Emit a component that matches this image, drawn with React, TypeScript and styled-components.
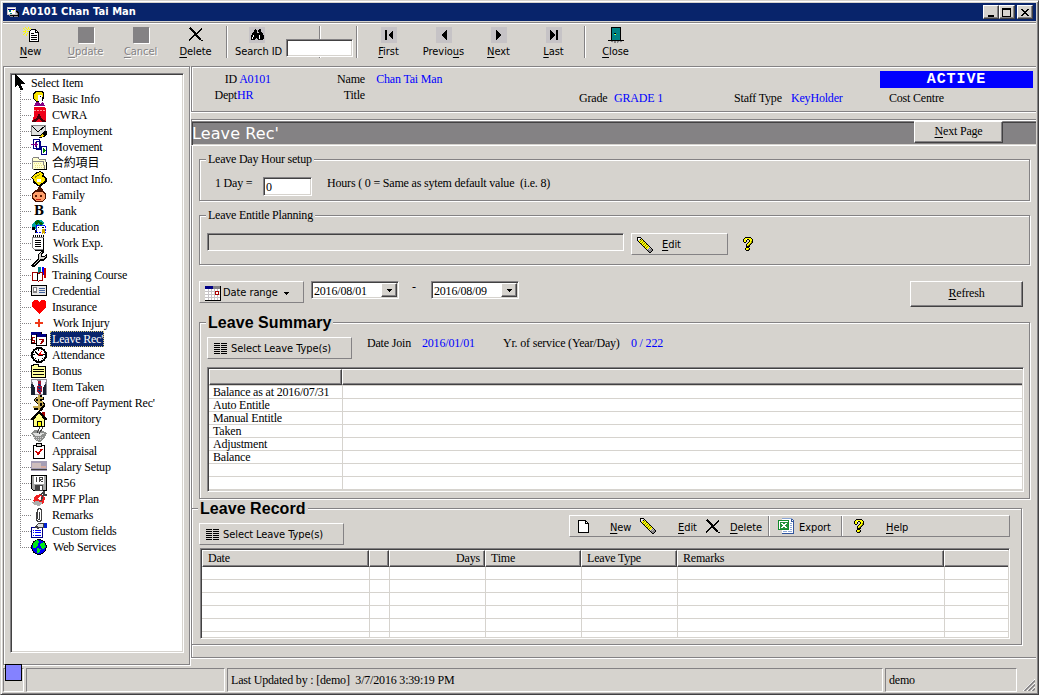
import React from "react";
import styled, { createGlobalStyle, css } from "styled-components";

const face = "#d6d3ce";
const shade = "#848284";
const dark = "#424142";
const navy = "#08246b";
const serif = `"Liberation Serif", "Noto Sans CJK TC", serif`;
const sans = `"DejaVu Sans Condensed", "DejaVu Sans", sans-serif`;

const GlobalStyle = createGlobalStyle`
  * { box-sizing: border-box; }
  body { margin: 0; background: #fff; font: 12px/14px ${serif}; letter-spacing: -0.19px; color: #000; overflow: hidden; }
  svg { display: block; flex: none; }
  u { text-decoration: underline; text-underline-offset: 2px; text-decoration-thickness: 1px; }
`;

const raised = css`
  border: 1px solid;
  border-color: #fff ${dark} ${dark} #fff;
  box-shadow: inset -1px -1px 0 ${shade};
  background: ${face};
`;
const thinRaised = css`
  border: 1px solid;
  border-color: #fff ${shade} ${shade} #fff;
  background: ${face};
`;
const sunken = css`
  border: 1px solid;
  border-color: ${shade} #fff #fff ${shade};
  box-shadow: inset 1px 1px 0 ${dark}, inset -1px -1px 0 ${face};
`;
const etched = css`
  border: 1px solid ${shade};
  box-shadow: 1px 1px 0 #fff, inset 1px 1px 0 #fff;
`;

const Window = styled.div`
  width: 1039px;
  height: 695px;
  padding: 2px;
  display: flex;
  flex-direction: column;
  background: ${face};
  border: 1px solid;
  border-color: ${face} ${dark} ${dark} ${face};
  box-shadow: inset 1px 1px 0 #fff, inset -1px -1px 0 ${shade};
  white-space: pre;
`;
const TitleBar = styled.div`
  height: 18px;
  flex: none;
  margin-bottom: 1px;
  padding: 0 3px 0 4px;
  display: flex;
  align-items: center;
  background: ${navy};
  color: #fff;
  font: bold 11px/18px ${sans};
`;
const TitleText = styled.span`
  flex: 1;
  margin-left: 3px;
  letter-spacing: 0.08px;
`;
const WinButton = styled.div<{ $gap?: number }>`
  ${raised}
  width: 16px;
  height: 14px;
  margin-left: ${(p) => p.$gap ?? 0}px;
  display: flex;
  align-items: center;
  justify-content: center;
`;
const Toolbar = styled.div`
  height: 44px;
  flex: none;
  display: flex;
  border-top: 1px solid ${shade};
  box-shadow: inset 0 1px 0 #fff;
  padding-top: 4px;
`;
const Tool = styled.div<{ $w?: number; $off?: boolean }>`
  width: ${(p) => p.$w ?? 55}px;
  display: flex;
  flex-direction: column;
  align-items: center;
  gap: 2px;
  font: 11px/14px ${sans};
  letter-spacing: -0.05px;
  color: ${(p) => (p.$off ? shade : "#000")};
  text-shadow: ${(p) => (p.$off ? "1px 1px 0 #fff" : "none")};
`;
const Blank = styled.div`
  width: 16px;
  height: 16px;
  background: ${shade};
  box-shadow: 1px 1px 0 #fff;
`;
const Sep = styled.div<{ $l?: number; $r?: number; $h?: number }>`
  width: 2px;
  height: ${(p) => p.$h ?? 32}px;
  margin: -1px ${(p) => p.$r ?? 0}px 0 ${(p) => p.$l ?? 0}px;
  background: linear-gradient(90deg, ${shade} 50%, #fff 50%);
`;
const SearchSlot = styled.div`
  width: 67px;
  height: 32px;
  margin-top: -1px;
  display: flex;
  align-items: flex-end;
  background: linear-gradient(90deg, ${shade} 50%, #fff 50%) 33px 0 / 2px 32px no-repeat;
`;
const SearchInput = styled.div`
  ${sunken}
  width: 67px;
  height: 18px;
  margin-bottom: 1px;
  background: #fff;
`;
const Body = styled.div`
  height: 601px;
  flex: none;
  display: flex;
`;
const Side = styled.div`
  ${etched}
  width: 187px;
  height: 599px;
  padding: 6px;
  flex: none;
`;
const Tree = styled.div`
  ${sunken}
  width: 174px;
  height: 580px;
  background: #fff;
  padding: 0 0 0 4px;
`;
const TreeRoot = styled.div`
  display: flex;
  height: 17px;
  line-height: 18px;
`;
const Branches = styled.div`
  margin-left: 5px;
`;
const Branch = styled.div<{ $last?: boolean }>`
  height: 16px;
  display: flex;
  align-items: center;
  background:
    repeating-linear-gradient(180deg, ${shade} 0 1px, transparent 1px 2px) 0 0 / 1px ${(p) => (p.$last ? 9 : 16)}px no-repeat,
    repeating-linear-gradient(90deg, ${shade} 0 1px, transparent 1px 2px) 0 8px / 11px 1px no-repeat;
  padding-left: 11px;
`;
const BranchText = styled.span<{ $on?: boolean; $indent?: boolean }>`
  height: 16px;
  line-height: 16px;
  margin-left: 3px;
  padding: 0 1px 0 ${(p) => (p.$indent ? 3 : 2)}px;
  color: ${(p) => (p.$on ? "#fff" : "#000")};
  background: ${(p) => (p.$on ? navy : "transparent")};
  outline: ${(p) => (p.$on ? "1px dotted #d8c878" : "none")};
  outline-offset: -1px;
`;
const Right = styled.div`
  flex: 1;
  margin-left: 1px;
  display: flex;
  flex-direction: column;
`;
const Info = styled.div`
  height: 46px;
  flex: none;
  border: solid ${shade};
  border-width: 1px 0 1px 1px;
  box-shadow: 0 1px 0 #fff, inset 1px 1px 0 #fff;
  display: flex;
  padding-top: 4px;
`;
const InfoCol = styled.div<{ $w: number; $top?: number; $right?: boolean; $blue?: boolean }>`
  width: ${(p) => p.$w}px;
  flex: none;
  padding-top: ${(p) => p.$top ?? 0}px;
  line-height: 16px;
  text-align: ${(p) => (p.$right ? "right" : "left")};
  color: ${(p) => (p.$blue ? "#00f" : "#000")};
`;
const CostCol = styled.div`
  width: 153px;
  line-height: 16px;
`;
const Status = styled.div`
  height: 17px;
  background: #00f;
  color: #fff;
  font: bold 15px/18px "Liberation Mono", monospace;
  letter-spacing: 0.9px;
  text-align: center;
`;
const CostLabel = styled.div`
  padding: 2px 0 0 9px;
`;
const Main = styled.div`
  height: 539px;
  flex: none;
  margin-top: 7px;
  border: solid ${shade};
  border-width: 1px 0 1px 1px;
  box-shadow: 0 1px 0 #fff, inset 1px 1px 0 #fff;
  padding: 1px 0 0 7px;
`;
const PageTitle = styled.div`
  margin-left: -8px;
  height: 25px;
  display: flex;
  justify-content: space-between;
  border: solid ${shade};
  border-width: 1px 0 0 1px;
  border-bottom: 1px solid #fff;
  background: ${shade};
  box-shadow: inset 1px 1px 0 ${dark}, inset 0 -1px 0 ${face};
  color: #fff;
  font: 16px/23px "DejaVu Sans", sans-serif;
  letter-spacing: 0.1px;
`;
const Button = styled.div<{ $w: number; $h: number }>`
  ${raised}
  width: ${(p) => p.$w}px;
  height: ${(p) => p.$h}px;
  padding-bottom: 2px;
  display: flex;
  align-items: center;
  justify-content: center;
  color: #000;
  font: 12px/14px ${serif};
  letter-spacing: -0.19px;
`;
const NextSlot = styled.div`
  margin: -1px 33px 0 0;
`;
const Group = styled.div<{ $h: number; $mt: number; $ml?: number }>`
  ${etched}
  width: 831px;
  height: ${(p) => p.$h}px;
  margin: ${(p) => p.$mt}px 0 0 ${(p) => p.$ml ?? 0}px;
  padding: 0 7px;
  display: flex;
  flex-direction: column;
  align-items: flex-start;
`;
const Legend = styled.div<{ $big?: boolean; $w: number }>`
  flex: none;
  width: ${(p) => p.$w}px;
  height: 17px;
  margin: -9px 0 0 -1px;
  padding-left: 2px;
  background: ${face};
  font: ${(p) => (p.$big ? `bold 16px/18px "Liberation Sans", sans-serif` : `12px/17px ${serif}`)};
  letter-spacing: ${(p) => (p.$big ? 0.05 : -0.23)}px;
`;
const Row = styled.div<{ $mt?: number; $ml?: number; $h?: number }>`
  display: flex;
  flex: none;
  height: ${(p) => (p.$h ? `${p.$h}px` : "auto")};
  margin: ${(p) => p.$mt ?? 0}px 0 0 ${(p) => p.$ml ?? 0}px;
`;
const Text = styled.span<{ $w?: number; $ml?: number; $mt?: number; $blue?: boolean }>`
  width: ${(p) => (p.$w ? `${p.$w}px` : "auto")};
  margin: ${(p) => p.$mt ?? 0}px 0 0 ${(p) => p.$ml ?? 0}px;
  color: ${(p) => (p.$blue ? "#00f" : "#000")};
`;
const Field = styled.div<{ $w: number; $h: number; $plain?: boolean }>`
  ${sunken}
  width: ${(p) => p.$w}px;
  height: ${(p) => p.$h}px;
  padding: 2px 0 0 2px;
  background: ${(p) => (p.$plain ? face : "#fff")};
`;
const ThinButton = styled.div<{ $w: number }>`
  ${thinRaised}
  width: ${(p) => p.$w}px;
  height: 22px;
  padding: 2px 0 0 5px;
  display: flex;
  align-items: center;
  font: 11px/14px ${sans};
  letter-spacing: -0.08px;
`;
const ThinText = styled.span<{ $ml: number }>`
  margin-left: ${(p) => p.$ml}px;
`;
const Combo = styled.div`
  ${sunken}
  width: 88px;
  height: 18px;
  padding: 1px;
  display: flex;
  justify-content: space-between;
  background: #fff;
  line-height: 17px;
`;
const ComboButton = styled.div`
  ${raised}
  width: 16px;
  height: 14px;
  display: flex;
  align-items: center;
  justify-content: center;
`;
const Spacer = styled.div`
  flex: 1;
`;
const Grid = styled.div<{ $w: number; $h: number }>`
  ${sunken}
  width: ${(p) => p.$w}px;
  height: ${(p) => p.$h}px;
  padding: 1px;
  background: #fff;
  overflow: hidden;
  flex: none;
`;
const HeadRow = styled.div<{ $cols: string }>`
  display: grid;
  grid-template-columns: ${(p) => p.$cols};
  height: 17px;
  border-bottom: 1px solid ${face};
`;
const HeadCell = styled.div<{ $right?: boolean }>`
  border: 1px solid;
  border-color: #fff ${dark} ${dark} #fff;
  box-shadow: inset -1px -1px 0 ${shade};
  background: ${face};
  padding: 0 4px 0 5px;
  line-height: 15px;
  text-align: ${(p) => (p.$right ? "right" : "left")};
  &:last-child { border-right: 0; box-shadow: inset 0 -1px 0 ${shade}; }
`;
const BodyRow = styled.div<{ $cols: string }>`
  display: grid;
  grid-template-columns: ${(p) => p.$cols};
  height: 13px;
  border-bottom: 1px solid ${face};
`;
const BodyCell = styled.div`
  height: 12px;
  line-height: 13px;
  padding-left: 4px;
  box-shadow: 1px 0 0 ${face};
  &:last-child { box-shadow: none; }
`;
const RecordBar = styled.div`
  ${thinRaised}
  width: 441px;
  height: 22px;
  padding-left: 8px;
  display: flex;
  align-items: center;
  font: 11px/14px ${sans};
  letter-spacing: -0.08px;
`;
const BarText = styled.span<{ $w: number; $pad: number }>`
  width: ${(p) => p.$w}px;
  padding: 3px 0 0 ${(p) => p.$pad}px;
`;
const StatusBar = styled.div`
  display: flex;
  padding-top: 1px;
  height: 25px;
  gap: 2px;
`;
const StatusCell = styled.div<{ $w: number }>`
  width: ${(p) => p.$w}px;
  height: 24px;
  padding-left: 3px;
  line-height: 22px;
  border: 1px solid;
  border-color: ${shade} #fff #fff ${shade};
`;
const Swatch = styled.div`
  width: 17px;
  height: 17px;
  margin: -5px 0 0 -2px;
  background: #8482ff;
  border: 1px solid #000;
  position: relative;
`;
const GripSlot = styled.div`
  flex: 1;
  display: flex;
  justify-content: flex-end;
  align-items: flex-end;
  padding: 0 1px 1px 0;
`;

const palette: Record<string, string> = {
  k: "#000", w: "#fff", y: "#ff0", g: "#848284", s: "#c6c3c6", t: "#008284",
  o: "#848200", n: "#000084", c: "#0ff", f: "#21923a", e: "#108a29", b: "#31559c", h: "#8ca6d6",
};

/* Draws a small bitmap: one character per pixel, runs merged into one rect. */
function Pixels({ rows }: { rows: string[] }) {
  const w = Math.max(...rows.map((r) => r.length));
  const rects: React.ReactNode[] = [];
  rows.forEach((row, y) => {
    let x = 0;
    while (x < row.length) {
      let n = x + 1;
      while (n < row.length && row[n] === row[x]) n++;
      if (palette[row[x]]) rects.push(<rect key={`${x}-${y}`} x={x} y={y} width={n - x} height={1} fill={palette[row[x]]} />);
      x = n;
    }
  });
  return <svg width={w} height={rows.length} shapeRendering="crispEdges">{rects}</svg>;
}

const art = {
  app: [
    "sssssssss...", "swwwwwwws...", "snnnnnnns...", "swttwwyws...", "swttwwwwskk.", "swwwwwwwsgkk", "swwttwwwssgk", "ssssssssssgk", "..gkkkkkkkkk", "...gggkggggk",
  ],
  neu: [
    "..y..y..........", "y..y.y.y........", ".y..y.y.kkkkk...", "..y....kwwwwkk..", "yyy.yykwwwwwkwk.", "..y...kwwwwwkkkk",
    ".y..y.kwkkkwwwwk", "y..y..kwwwwwwwwk", "...y..kwkkkkkkwk", "......kwwwwwwwwk", "......kwkkkkkkwk", "......kwwwwwwwwk", "......kwkkkkkkwk", "......kwwwwwwwwk", "......kkkkkkkkkk",
  ],
  cross: [
    ".k............", "kkk.........k.", ".kkk.......kk.", "..kkk.....kk..", "...kkk...kk...", "....kkk.kk....", ".....kkkk.....", ".....kkk......", "....kkkkk.....", "...kk..kkk....", "..kk....kkk...", ".kk......kkk..", "kk........kk..", "k...........kk",
  ],
  find: [
    "ssssssssssssssss", "ssssssssssssssss", "sssssskssskkssss", "ssssskkkskkkssss", "ssssskkkskkkssss", "sssskkkksskkksss", "ssskkkkkkkkkkkss", "ssskkkkkkkkkkkss", "sskkwkkkkkwkkkks", "sskkwkkkkkwkkkks", "sskwkkkkkkwkkkks", "sskwkkkskkwkkkks", "sskkkkssskkkkkss", "ssssssssssssssss", "ssssssssssssssss", "ssssssssssssssss",
  ],
  cursor: [
    "k...........", "kk..........", "kkk.........", "kkkk........", "kkkkk.......", "kkkkkk......", "kkkkkkk.....", "kkkkkkkk....", "kkkkkkkkk...", "kkkkkkkkkk..", "kkkkkk......", "kk.kkk......", "k...kkk.....", "....kkk.....", ".....kkk....", ".....kkk....",
  ],
  pencil: [
    "kkkk............", "kwwsk...........", "kwskyk..........", "ksyyoyk.........", ".kyoyyok........", "..kyyoyyk.......", "...koyyoyk......", "....kyoyyok.....", ".....kyyoyyk....", "......koyyoyk...", ".......kyoyysk..", "........kyysgsk.", ".........ksgsggk", "..........kggggk", "...........kggk.", "............kk..",
  ],
  help: [
    "..kkkkkk..", ".kyyyyyyk.", "kyywkkyyyk", "kyyk..kyyk", "kyyk..kyok", ".kk..kyyok", "....kyyok.", "...kyyok..", "...kyok...", "...kkkk...", "...kkk....", "..kyyyk...", "..kyyok...", "...kkk....",
  ],
  page: [
    "kkkkkkkk...", "kwwwwwwkk..", "kwwwwwwkwk.", "kwwwwwwkkkk", "kwwwwwwwwwk", "kwwwwwwwwwk", "kwwwwwwwwwk", "kwwwwwwwwwk", "kwwwwwwwwwk", "kwwwwwwwwwk", "kwwwwwwwwwk", "kwwwwwwwwwk", "kkkkkkkkkkk",
  ],
  door: [
    "...kkkkkkkkkk...", "...kttttttttk...", "...kttttttttk...", "...kttttttttk...", "...kttttttttk...", "...kttttttttk...", "...kttkkttttk...", "...kttcyttttk...", "...kttttttttk...", "...kttttttttk...", "...kttttttttk...", "...kttttttttk...", "...kttttttttk...", "kkkkkkkkkkkkkkkk", "...ggsggsggsgg..", "....s.gg.gs.s...",
  ],
  excel: [
    "....hhhhhhhhhh..", "....wwwwwwwwwbb.", "eeeeeeeeeeewwbwb", "ewwwwwwwwwewwbbb", "ewffffffffewwwwb", "ewfwwffwwfewhhwb", "ewffwwwwffewwwwb", "ewfffwwfffewhhwb", "ewffwwwwffewwwwb", "ewfwwffwwfewhhwb", "ewffffffffewwwwb", "eeeeeeeeeeewhhwb", "....wwwwwwwwwwwb", "....whhhhwhhhhwb", "....wwwwwwwwwwwb", "....bbbbbbbbbbbb",
  ],
  arrow: ["kkkkk", ".kkk.", "..k.."],
};

function Nav({ kind }: { kind: "first" | "prev" | "next" | "last" }) {
  const left = kind === "first" || kind === "prev";
  return (
    <svg width="16" height="16" shapeRendering="crispEdges">
      <rect width="16" height="16" fill="#c6c3c6" />
      {kind === "first" && <rect x="4" y="3" width="2" height="10" />}
      {kind === "last" && <rect x="10" y="3" width="2" height="10" />}
      {left ? <path d={kind === "first" ? "M12 3v10l-5-5z" : "M11 3v10L5 8z"} /> : <path d={kind === "last" ? "M4 3v10l5-5z" : "M5 3v10l6-5z"} />}
    </svg>
  );
}

function ListIcon() {
  return (
    <svg width="14" height="12" shapeRendering="crispEdges">
      {[0, 2, 4, 6, 8, 10].map((y) => <path key={y} d={`M0 ${y}h6v1H0zM7 ${y}h6v1H7z`} />)}
    </svg>
  );
}

function CalendarIcon() {
  return (
    <svg width="16" height="15" shapeRendering="crispEdges">
      <rect width="16" height="15" fill="#fff" />
      <rect width="8" height="3" fill="#000084" /><rect x="8" width="7" height="3" fill="#848284" />
      <path d="M3.5 3v11M6.5 3v11M9.5 3v11M12.5 3v11M0 5.5h15M0 8.5h15M0 11.5h15" stroke="#c6c3c6" />
      <rect x="10.5" y="5.5" width="3" height="3" fill="#fff" stroke="#a00" />
      <path d="M15.5 0v14.5H0" fill="none" stroke="#000" />
    </svg>
  );
}

const treeArt: Record<string, React.ReactNode> = {
  face: <><path d="M2 2l2-2h7l2 2v5l-2 4H5L2 8z" /><path d="M3 3l2-2h5l2 2v3H9L7 7v3H5L3 8z" fill="#f7e300" /><path d="M7 4h4v6l-2 2-2-2z" fill="#fff" /><path d="M9 5h1v1H9z" /><path d="M3 15l2-4h3l1 2 3-2 2 4z" fill="#840084" /></>,
  pdf: <><path d="M3 0h11l1 2v13H1L3 8z" fill="#ef0018" /><path d="M3 3.500h11" stroke="#ff9a9a" strokeDasharray="2 1" /><path d="M1 14l5-3 1-4h2l1 4 5 3v1h-3l-4-3-4 3H1z" fill="#4a0008" /></>,
  mail: <><rect x=".5" y="2.500" width="14" height="10" fill="#dedfde" stroke="#848284" /><path d="M1 3l6 6 7-6" fill="none" stroke="#000" /><path d="M0 12.500h10" stroke="#000" /><path d="M8 15l2-4 4-3h2v3l-3 3z" fill="#000" /><path d="M9 14l2-3 2 1-2 2z" fill="#f7d300" /></>,
  move: <><path d="M2.500.5h6v9h-6zM5.500 2.500h4v8h-4z" fill="#fff" stroke="#000084" /><path d="M10.500 7.500h5v8h-5z" fill="#fff" stroke="#000084" /><path d="M0 5h4V3l3 2.500L4 8V6H0z" fill="#840084" /><path d="M12 9l3 2.500-3 2.500z" fill="#008200" /></>,
  folder: <><path d="M1 13V4l2-2h4l1 2h6v2l1 1v7H2z" fill="#ffffce" stroke="#848284" /><path d="M1 6.500h11l2 7" fill="none" stroke="#848284" /><path d="M3 8.500h8M4 10.500h9M4 12.500h9" stroke="#e7db84" strokeDasharray="1 1" /><path d="M3 14.500h13M15.500 7v8" stroke="#000" /></>,
  phone: <><path d="M0 6l4-4 5-2 4 2v3l3 2v4l-7 5-7-4V9z" /><path d="M1 6l4-3 4-2 3 2-2 2 4 2v3l-6 4-5-4V9z" fill="#ffe700" /><path d="M3 6l6-3v1L4 7z" fill="#848200" /><path d="M6 8h4v3H6z" fill="#fff" /></>,
  baby: <><path d="M1 7l3-4 3-1V0h2l3 3 3 4v4l-3 4H4l-3-4z" fill="#4a1000" /><path d="M2 8l2-3h7l3 3v3l-3 3H5l-3-3z" fill="#ff9e6b" /><path d="M4 8h2v2H4zM9 8h2v2H9z" fill="#5a1800" /><path d="M5 12h5v1H5z" fill="#c62010" /></>,
  edu: <><path d="M1 5l4-4h5l3 3-2 5-9 1z" fill="#00a29c" /><path d="M4 2l3-1 5 3-2 2-3-2-2 3z" fill="#006100" /><path d="M1 8h3v3H1zM4 11h3v3H4z" /><rect x="5.500" y="6.500" width="9" height="7" fill="#fff" stroke="#00f" strokeDasharray="2 1" /><path d="M7 8h1v1H7zM11 8h2v1h-2z" /><path d="M11 10h3v5h-1l-1-1-1 1z" fill="#cea600" /></>,
  note: <><path d="M1.500 2.500h11v12h-9l-2-2z" fill="#fff" stroke="#848284" /><path d="M12.500 3v12H4" fill="none" stroke="#000" /><path d="M2 1h11" stroke="#000" strokeWidth="2" strokeDasharray="1 1" /><path d="M4 5.500h6M4 7.500h6M4 9.500h6M4 11.500h6" stroke="#000" /></>,
  tool: <><path d="M0 14l7-7V3l3-3h3v2l-2 1v2h2l2-2h1v3l-3 4h-4l-6 6H1z" /><path d="M2 14l6-6V4l2-3h1l-1 2v3h3l2-1-2 3H9l-6 6z" fill="#d6d3ce" /></>,
  books: <><path d="M7 0h3v6H7z" fill="#008284" /><path d="M11 0h2v8h-2z" fill="#00f" /><path d="M13 1h2v10h-2z" fill="#c00" /><path d="M1.500 5.500h4l2 1 2-1h2v8h-3l-1 1-1-1h-5z" fill="#fff" stroke="#a00000" /><path d="M6.500 6v8" stroke="#000" /></>,
  card: <><rect x=".5" y="2.500" width="15" height="10" fill="#e7e7e7" stroke="#000" /><path d="M2 4h4v6H2z" fill="#848284" /><path d="M3 5h2v3H3z" fill="#fff" /><path d="M8 5.500h6M8 7.500h6M8 9.500h6" stroke="#42619c" /></>,
  heart: <path d="M8 15L1 8V3l2-2h3l2 2 2-2h3l2 2v5z" fill="#f00" />,
  plus: <path d="M4 7h3V4h2v3h3v2H9v3H7V9H4z" fill="#ef3818" />,
  leave: <><rect x=".5" y="1.500" width="10" height="11" fill="#fff" stroke="#000" /><rect x="0" y="1" width="10" height="3" fill="#000084" /><path d="M1 6h3v1H2v2h2v3H1v-1h2v-1H1z" fill="#a00000" /><rect x="5.500" y="3.500" width="10" height="11" fill="#fff" stroke="#000" /><rect x="6" y="3" width="9" height="3" fill="#000084" /><path d="M8 8h5v2l-2 3H9l2-4H8z" fill="#a00000" /></>,
  clock: <><circle cx="8" cy="8" r="7" fill="#fff" stroke="#000" strokeWidth="2" /><path d="M7.500 2v2M7.500 12v2M2 7.500h2M12 7.500h2M4 4l1 1M4 12l1-1M12 12l-1-1" stroke="#000" /><path d="M11 4L8 8l4-1" fill="none" stroke="#f00" /><path d="M4 5l4 3h4" fill="none" stroke="#000" /></>,
  bonus: <><path d="M.5 14.500v-12h2v-1h5v2h7v11z" fill="#ffff9c" stroke="#000" /><path d="M2 6.500h11M2 8.500h11M2 11.500h11" stroke="#000" /></>,
  tie: <><rect width="16" height="16" fill="#8c8a94" /><path d="M1 1h5l2 3 2-3h5L12 15H4z" fill="#f7f7ff" /><path d="M7 2h3l1 10-2 4-3-4z" fill="#a01030" /><path d="M7 5l3 2M7 8l3 2M7 11l3 2" stroke="#003084" /><path d="M0 5v11h4V9L2 5zM15 5v11h-3V9l2-4z" fill="#182030" /></>,
  dollar: <><path d="M9 0v16M13 3H7L5 5l2 2h4l2 3-2 3H3" fill="none" stroke="#000" strokeWidth="3" /><path d="M8 0v15M12 3H6L4 5l2 2h5l1 3-2 2H2" fill="none" stroke="#c6aa52" strokeWidth="1.300" /></>,
  house: <><path d="M11 1h3v7h-3z" fill="#a00000" /><path d="M2.500 8v7.500h11V8L8 2z" fill="#ffff84" stroke="#000" /><path d="M0 9l8-8 8 8" fill="none" stroke="#000" strokeWidth="1.600" /><path d="M6.500 10.500h4v5h-4z" fill="#ff0" stroke="#000" /></>,
  bowl: <><path d="M0 6l4-3 8 1 4 2-3 6-4 3-4-1z" fill="#8c8e8c" /><path d="M1 6h13l-5 3H5z" fill="#dedfde" /><path d="M12 0L8 7M9 0L6 6" stroke="#424142" /><path d="M3 10.500h9M5 12.500h6" stroke="#d6d3d6" strokeDasharray="1 1" /></>,
  check: <><rect x="2.500" y="2.500" width="11" height="13" fill="#fff" stroke="#000" /><path d="M5 0h6v4H5z" /><path d="M6 1h4v2H6z" fill="#d6d3ce" /><path d="M5 8l2 3 4-5" fill="none" stroke="#c00" strokeWidth="1.800" /></>,
  salary: <><rect y="2" width="16" height="10" fill="#a59eb5" /><path d="M1 4h9v5H1z" fill="#cebebd" /><path d="M0 10.500h16" stroke="#424142" /><path d="M10 7h5v2h-5z" fill="#d6aaa0" /></>,
  disk: <><path d="M.5.5h15v15h-13l-2-2z" fill="#a5a6a5" stroke="#000" /><rect x="3" y="1" width="10" height="8" fill="#fff" /><path d="M5.500 2v5M8.500 7V2.500h3v2h-3l3 2.500" fill="none" stroke="#424142" /><path d="M4 10h8v6H4z" fill="#424142" /><path d="M9 11h2v4H9z" fill="#fff" /></>,
  mpf: <><path d="M2 10l2-5 5-2 5 3-1 6-6 2z" fill="#ef2020" /><path d="M1 11l5-1 6 2-4 3-5-1z" fill="#adaead" /><path d="M6 8l4-3v4z" fill="#fff" /><path d="M10 4l3-4v4h3M12 4l-2 6" fill="none" stroke="#424142" strokeWidth="1.500" /></>,
  clip: <path d="M5.500 5v7.500l1 2h3l1-2v-9l-1-2h-2l-1 2v8l1 1h1V5" fill="none" stroke="#424142" />,
  custom: <><rect x=".5" y="4.500" width="11" height="10" fill="#fff" stroke="#000084" /><path d="M2 7.500h1M2 9.500h1M2 12.500h1M4 7.500h6M4 9.500h6M4 12.500h6" stroke="#00f" /><path d="M3 4l4-4h6v5H9L7 6z" fill="#424142" /><path d="M5 3l3-2h4v3H8z" fill="#dedfde" /><path d="M13 0h3v5h-3z" fill="#0020d0" /></>,
  globe: <><circle cx="8" cy="8" r="7.300" fill="#0000f7" stroke="#000" /><path d="M2 4l4-3 2 1-1 4-3 3H2zM9 5l4-2 2 5-3 2-2-1zM6 9l4 1-2 4H6z" fill="#00e718" /></>,
};

const Bank = styled.span`
  width: 16px;
  flex: none;
  text-align: center;
  font: bold 12px/16px "DejaVu Serif", serif;
`;

function TreeIcon({ name }: { name: string }) {
  if (name === "bank") return <Bank>B</Bank>;
  return <svg width="16" height="16" viewBox="0 0 16 16" shapeRendering="crispEdges">{treeArt[name]}</svg>;
}

const items: [string, string, boolean?][] = [
  ["face", "Basic Info"], ["pdf", "CWRA"], ["mail", "Employment"], ["move", "Movement"], ["folder", "合約項目"],
  ["phone", "Contact Info."], ["baby", "Family"], ["bank", "Bank"], ["edu", "Education"], ["note", "Work Exp.", true],
  ["tool", "Skills"], ["books", "Training Course"], ["card", "Credential"], ["heart", "Insurance"], ["plus", "Work Injury", true],
  ["leave", "Leave Rec'"], ["clock", "Attendance"], ["bonus", "Bonus"], ["tie", "Item Taken"], ["dollar", "One-off Payment Rec'"],
  ["house", "Dormitory"], ["bowl", "Canteen"], ["check", "Appraisal"], ["salary", "Salary Setup"], ["disk", "IR56"],
  ["mpf", "MPF Plan"], ["clip", "Remarks"], ["custom", "Custom fields"], ["globe", "Web Services", true],
];

const summaryRows = ["Balance as at 2016/07/31", "Auto Entitle", "Manual Entitle", "Taken", "Adjustment", "Balance", "", ""];
const recordHeads = ["Date", "", "Days", "Time", "Leave Type", "Remarks", ""];
const summaryCols = "133px 1fr";
const recordCols = "167px 20px 96px 96px 96px 267px 1fr";

function DateBox({ value }: { value: string }) {
  return (
    <Combo>
      <Text $ml={1}>{value}</Text>
      <ComboButton><Pixels rows={art.arrow} /></ComboButton>
    </Combo>
  );
}

function SelectTypes() {
  return <ThinButton $w={145}><Row $ml={1}><ListIcon /></Row><ThinText $ml={3}>Select Leave Type(s)</ThinText></ThinButton>;
}

export default function App() {
  return (
    <>
      <GlobalStyle />
      <Window>
        <TitleBar>
          <Pixels rows={art.app} />
          <TitleText>A0101 Chan Tai Man</TitleText>
          <WinButton><svg width="10" height="9" shapeRendering="crispEdges"><path d="M2 7h6v2H2z" /></svg></WinButton>
          <WinButton><svg width="10" height="9" shapeRendering="crispEdges"><path d="M0 0h9v9H0zM1 2v6h7V2z" fillRule="evenodd" /></svg></WinButton>
          <WinButton $gap={2}><svg width="8" height="7" shapeRendering="crispEdges"><path d="M0 0h2v1h1v1h2V1h1V0h2v1H7v1H6v1H5v1h1v1h1v1h1v1H6V6H5V5H3v1H2v1H0V6h1V5h1V4h1V3H2V2H1V1H0z" /></svg></WinButton>
        </TitleBar>
        <Toolbar>
          <Tool><Pixels rows={[...art.neu, ""]} /><span><u>N</u>ew</span></Tool>
          <Tool $off><Blank /><span><u>U</u>pdate</span></Tool>
          <Tool $off><Blank /><span><u>C</u>ancel</span></Tool>
          <Tool><Pixels rows={[...art.cross, "", ""]} /><span><u>D</u>elete</span></Tool>
          <Sep $l={3} />
          <Tool $w={58}><Pixels rows={art.find} /><span> Search ID</span></Tool>
          <SearchSlot><SearchInput /></SearchSlot>
          <Sep $l={3} $r={3} />
          <Tool><Nav kind="first" /><span><u>F</u>irst</span></Tool>
          <Tool><Nav kind="prev" /><span>Previo<u>u</u>s</span></Tool>
          <Tool><Nav kind="next" /><span><u>N</u>ext</span></Tool>
          <Tool><Nav kind="last" /><span><u>L</u>ast</span></Tool>
          <Sep $l={3} $r={2} />
          <Tool><Pixels rows={art.door} /><span><u>C</u>lose</span></Tool>
        </Toolbar>
        <Body>
          <Side>
            <Tree>
              <TreeRoot><Pixels rows={art.cursor} /><Text $ml={4}>Select Item</Text></TreeRoot>
              <Branches>
                {items.map(([icon, label, indent], i) => (
                  <Branch key={label} $last={i === items.length - 1}>
                    <TreeIcon name={icon} />
                    <BranchText $on={label === "Leave Rec'"} $indent={indent}>{label}</BranchText>
                  </Branch>
                ))}
              </Branches>
            </Tree>
          </Side>
          <Right>
            <Info>
              <InfoCol $w={45} $right>{"ID\nDept"}</InfoCol>
              <InfoCol $w={90} $blue>{" A0101\n HR".replace("\n ", "\n")}</InfoCol>
              <InfoCol $w={38} $right>{"Name\nTitle"}</InfoCol>
              <InfoCol $w={214} $blue>{"    Chan Tai Man"}</InfoCol>
              <InfoCol $w={35} $top={19}>Grade</InfoCol>
              <InfoCol $w={120} $top={19} $blue>GRADE 1</InfoCol>
              <InfoCol $w={57} $top={19}>Staff Type</InfoCol>
              <InfoCol $w={89} $top={19} $blue>KeyHolder</InfoCol>
              <CostCol><Status>ACTIVE</Status><CostLabel>Cost Centre</CostLabel></CostCol>
            </Info>
            <Main>
              <PageTitle>
                <span>Leave Rec'</span>
                <NextSlot><Button $w={89} $h={22}><span><u>N</u>ext Page</span></Button></NextSlot>
              </PageTitle>
              <Group $mt={13} $h={42}>
                <Legend $w={108}>Leave Day Hour setup</Legend>
                <Row $mt={9} $ml={8}>
                  <Text $w={48} $mt={-1}>1 Day =</Text>
                  <Field $w={49} $h={19}>0</Field>
                  <Text $ml={15} $mt={-1}>Hours ( 0 = Same as sytem default value  (i.e. 8)</Text>
                </Row>
              </Group>
              <Group $mt={14} $h={50}>
                <Legend $w={109}>Leave Entitle Planning</Legend>
                <Row $mt={9}>
                  <Field $w={417} $h={18} $plain />
                  <Row $ml={7}><ThinButton $w={97}><Pixels rows={art.pencil} /><ThinText $ml={9}><u>E</u>dit</ThinText></ThinButton></Row>
                  <Row $ml={15} $mt={4}><Pixels rows={art.help} /></Row>
                </Row>
              </Group>
              <Row $mt={16} $h={26}>
                <ThinButton $w={105}><CalendarIcon /><ThinText $ml={2}>Date range</ThinText><ThinText $ml={6}><Pixels rows={art.arrow} /></ThinText></ThinButton>
                <Row $ml={7}><DateBox value="2016/08/01" /></Row>
                <Text $ml={13} $w={19} $mt={-1}>-</Text>
                <DateBox value="2016/08/09" />
                <Spacer />
                <Button $w={113} $h={26}><span><u>R</u>efresh</span></Button>
                <Text $w={13} />
              </Row>
              <Group $mt={15} $h={177}>
                <Legend $big $w={127}>Leave Summary</Legend>
                <Row $mt={6}>
                  <SelectTypes />
                  <Text $ml={15} $w={55} $mt={-1}>Date Join</Text>
                  <Text $blue $w={81} $mt={-1}>2016/01/01</Text>
                  <Text $w={128} $mt={-1}>Yr. of service (Year/Day)</Text>
                  <Text $blue $mt={-1}>0 / 222</Text>
                </Row>
                <Row $mt={8}>
                  <Grid $w={817} $h={125}>
                    <HeadRow $cols={summaryCols}><HeadCell /><HeadCell /></HeadRow>
                    {summaryRows.map((r, i) => <BodyRow key={i} $cols={summaryCols}><BodyCell>{r}</BodyCell><BodyCell /></BodyRow>)}
                  </Grid>
                </Row>
              </Group>
              <Group $mt={9} $h={137} $ml={-8}>
                <Legend $big $w={110}>Leave Record</Legend>
                <Row $mt={-2} $h={32}>
                  <Row $mt={8}><SelectTypes /></Row>
                  <Row $ml={225}>
                    <RecordBar>
                      <Pixels rows={art.page} />
                      <BarText $w={51} $pad={21}><u>N</u>ew</BarText>
                      <Pixels rows={art.pencil} />
                      <BarText $w={50} $pad={22}><u>E</u>dit</BarText>
                      <Pixels rows={art.cross} />
                      <BarText $w={48} $pad={10}><u>D</u>elete</BarText>
                      <Sep $h={20} $r={8} />
                      <Pixels rows={art.excel} />
                      <BarText $w={47} $pad={5}>Export</BarText>
                      <Sep $h={20} $r={11} />
                      <Pixels rows={art.help} />
                      <BarText $w={60} $pad={22}><u>H</u>elp</BarText>
                    </RecordBar>
                  </Row>
                </Row>
                <Row $ml={1} $mt={1}>
                  <Grid $w={810} $h={91}>
                    <HeadRow $cols={recordCols}>{recordHeads.map((h, i) => <HeadCell key={i} $right={h === "Days"}>{h}</HeadCell>)}</HeadRow>
                    {[0, 1, 2, 3, 4, 5].map((r) => <BodyRow key={r} $cols={recordCols}>{recordHeads.map((_, i) => <BodyCell key={i} />)}</BodyRow>)}
                  </Grid>
                </Row>
              </Group>
            </Main>
          </Right>
        </Body>
        <StatusBar>
          <StatusCell $w={21}><Swatch /></StatusCell>
          <StatusCell $w={199}> </StatusCell>
          <StatusCell $w={656}>Last Updated by : [demo]  3/7/2016 3:39:19 PM</StatusCell>
          <StatusCell $w={132}>demo</StatusCell>
          <GripSlot>
            <svg width="12" height="12"><path d="M0 12L12 0M4 12l8-8M8 12l4-4" stroke="#fff" /><path d="M1.500 12L12 1.500M5.500 12L12 5.500M9.500 12L12 9.500" stroke={shade} strokeWidth="1.600" /></svg>
          </GripSlot>
        </StatusBar>
      </Window>
    </>
  );
}
